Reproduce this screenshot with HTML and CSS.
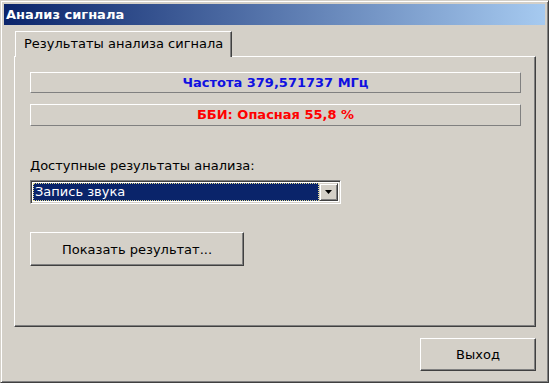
FILE: index.html
```html
<!DOCTYPE html>
<html lang="ru">
<head>
    <meta charset="UTF-8">
    <title>Анализ сигнала</title>
    <link rel="stylesheet" href="styles.css">
</head>
<body>

<div class="window">
    <div class="titlebar">Анализ сигнала</div>

    <div class="client">
        <div class="tabs">
            <div class="tab">Результаты анализа сигнала</div>
        </div>

        <div class="panel">
            <div class="info freq">Частота 379,571737 МГц</div>
            <div class="info danger">ББИ: Опасная 55,8 %</div>

            <div class="label">Доступные результаты анализа:</div>
            <div class="combo">
                <div class="combo-value"><span class="focus">Запись звука</span></div>
                <div class="combo-btn">
                    <svg width="7" height="4" viewBox="0 0 7 4"><path d="M0 0h7L3.5 4z" fill="#000"/></svg>
                </div>
            </div>

            <button class="btn show-btn">Показать результат...</button>
        </div>

        <div class="footer">
            <button class="btn exit-btn">Выход</button>
        </div>
    </div>
</div>

</body>
</html>
```

FILE: styles.css
```css
body {
    margin: 0;
    padding: 0;
    background-color: #d4d0c8;
    font-family: "DejaVu Sans", sans-serif;
    font-size: 13px;
    color: #000;
}
.window {
    width: 549px;
    height: 383px;
    box-sizing: border-box;
    border: 1px solid;
    border-color: #d4d0c8 #404040 #404040 #d4d0c8;
    box-shadow: inset 1px 1px #fff, inset -1px -1px #808080;
    padding: 3px;
    background-color: #d4d0c8;
    display: flex;
    flex-direction: column;
}
.titlebar {
    height: 21px;
    line-height: 21px;
    padding-left: 2px;
    background: linear-gradient(to right, #0a246a, #a6caf0);
    color: #fff;
    font-weight: bold;
    font-size: 13px;
}
.client {
    flex: 1;
    display: flex;
    flex-direction: column;
    padding: 6px 9px 8px 10px;
}
.tabs {
    display: flex;
    padding-left: 1px;
    height: 25px;
}
.tab {
    position: relative;
    z-index: 1;
    height: 26px;
    box-sizing: border-box;
    padding: 0 8px;
    line-height: 24px;
    background-color: #d4d0c8;
    border-top: 1px solid #fff;
    border-left: 1px solid #fff;
    border-right: 1px solid #404040;
    box-shadow: inset -1px 0 #808080;
}
.panel {
    height: 271px;
    box-sizing: border-box;
    border: 1px solid;
    border-color: #fff #404040 #404040 #fff;
    box-shadow: inset -1px -1px #808080;
    padding: 15px 14px 0 15px;
    display: flex;
    flex-direction: column;
    align-items: flex-start;
}
.info {
    align-self: stretch;
    height: 21px;
    box-sizing: border-box;
    border: 1px solid;
    border-color: #fff #808080 #808080 #fff;
    text-align: center;
    font-weight: bold;
    line-height: 19px;
}
.freq {
    color: #1010e0;
}
.danger {
    color: #f00;
    margin-top: 11px;
    height: 22px;
}
.label {
    margin-top: 32px;
    line-height: 16px;
}
.combo {
    margin-top: 6px;
    width: 311px;
    height: 24px;
    box-sizing: border-box;
    border: 1px solid;
    border-color: #808080 #fff #fff #808080;
    box-shadow: inset 1px 1px #404040, inset -1px -1px #d4d0c8;
    padding: 2px;
    display: flex;
    background-color: #fff;
}
.combo-value {
    flex: 1;
    display: flex;
}
.focus {
    flex: 1;
    background-color: #0a246a;
    color: #fff;
    outline: 1px dotted #e0d890;
    outline-offset: -1px;
    line-height: 18px;
    padding-left: 2px;
}
.combo-btn {
    width: 19px;
    box-sizing: border-box;
    border: 1px solid;
    border-color: #d4d0c8 #404040 #404040 #d4d0c8;
    box-shadow: inset 1px 1px #fff, inset -1px -1px #808080;
    background-color: #d4d0c8;
    display: flex;
    align-items: center;
    justify-content: center;
}
.btn {
    font-family: "DejaVu Sans", sans-serif;
    font-size: 13px;
    color: #000;
    background-color: #d4d0c8;
    border: 1px solid;
    border-color: #fff #404040 #404040 #fff;
    box-shadow: inset -1px -1px #808080;
    padding: 0;
}
.show-btn {
    margin-top: 28px;
    width: 214px;
    height: 34px;
}
.footer {
    display: flex;
    justify-content: flex-end;
    padding-top: 11px;
}
.exit-btn {
    width: 116px;
    height: 33px;
}
```
